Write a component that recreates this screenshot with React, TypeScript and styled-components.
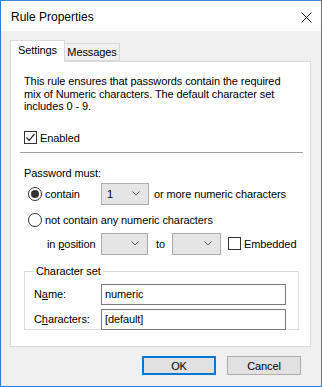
import React from "react";
import styled, { createGlobalStyle } from "styled-components";

const Global = createGlobalStyle`
  html, body { margin: 0; padding: 0; background: #f0f0f0; }
  body { width: 322px; height: 387px; overflow: hidden; }
  * { box-sizing: border-box; }
`;

const FONT = `"Segoe UI", "Liberation Sans", Arial, sans-serif`;

const Window = styled.div`
  width: 322px;
  height: 387px;
  border: 1px solid #2d7fd3;
  border-top-color: #3b86d6;
  background: #f0f0f0;
  font-family: ${FONT};
  font-size: 11px;
  letter-spacing: -0.1px;
  color: #000;
  display: flex;
  flex-direction: column;
  white-space: nowrap;
`;

const TitleBar = styled.div`
  height: 30px;
  background: #fff;
  display: flex;
  align-items: center;
  justify-content: space-between;
  padding: 0 8px 0 10px;
  flex-shrink: 0;
`;

const Title = styled.span`
  font-size: 12px;
  letter-spacing: 0;
  margin-top: 1px;
`;

const CloseBtn = styled.div`
  width: 14px;
  height: 14px;
  display: flex;
  align-items: center;
  justify-content: center;
  margin-top: 3px;
`;

const Body = styled.div`
  padding: 9px 10px 0 9px;
  display: flex;
  flex-direction: column;
`;

const TabStrip = styled.div`
  display: flex;
  align-items: flex-end;
  height: 21px;
  position: relative;
  z-index: 1;
`;

const Tab = styled.div<{ $active?: boolean }>`
  height: ${(p) => (p.$active ? "22px" : "18px")};
  border: 1px solid #d9d9d9;
  border-bottom: ${(p) => (p.$active ? "none" : "1px solid #d9d9d9")};
  margin-left: ${(p) => (p.$active ? "0" : "-1px")};
  margin-bottom: ${(p) => (p.$active ? "-1px" : "0")};
  background: ${(p) => (p.$active ? "#fff" : "#f0f0f0")};
  display: flex;
  align-items: center;
  padding-bottom: ${(p) => (p.$active ? "3px" : "0")};
  width: ${(p) => (p.$active ? "55px" : "56px")};
  justify-content: center;
`;

const Panel = styled.div`
  height: 286px;
  background: #fff;
  border: 1px solid #d9d9d9;
  padding: 13px 0 0 13px;
  display: flex;
  flex-direction: column;
`;

const Desc = styled.p`
  margin: 0;
  line-height: 12.5px;
`;

const CheckRow = styled.label<{ $mt?: number }>`
  display: flex;
  align-items: center;
  height: 14px;
  margin-top: ${(p) => p.$mt ?? 0}px;
  gap: 3px;
`;

const Box = styled.span`
  width: 13px;
  height: 13px;
  border: 1px solid #333;
  background: #fff;
  display: inline-flex;
  align-items: center;
  justify-content: center;
  flex-shrink: 0;
`;

const Separator = styled.div`
  height: 1px;
  background: #a0a0a0;
  width: 283px;
  margin: 7px 0 0 -4px;
`;

const Label = styled.div<{ $mt?: number }>`
  margin-top: ${(p) => p.$mt ?? 0}px;
  line-height: 13px;
`;

const Row = styled.div<{ $mt?: number; $h?: number; $pl?: number }>`
  display: flex;
  align-items: center;
  height: ${(p) => p.$h ?? 22}px;
  margin-top: ${(p) => p.$mt ?? 0}px;
  padding-left: ${(p) => p.$pl ?? 0}px;
`;

const RadioCircle = styled.span<{ $on?: boolean }>`
  width: 14px;
  height: 14px;
  border-radius: 50%;
  border: 1px solid #333;
  background: #fff;
  display: inline-flex;
  align-items: center;
  justify-content: center;
  flex-shrink: 0;
  margin-right: 3px;
  &::after {
    content: "";
    width: 8px;
    height: 8px;
    border-radius: 50%;
    background: ${(p) => (p.$on ? "#333" : "transparent")};
  }
`;

const Cell = styled.span<{ $w: number; $pl?: number }>`
  width: ${(p) => p.$w}px;
  padding-left: ${(p) => p.$pl ?? 0}px;
  flex-shrink: 0;
`;

const Select = styled.div<{ $w?: number }>`
  width: ${(p) => p.$w ?? 48}px;
  height: 22px;
  background: #e5e5e5;
  border: 1px solid #acacac;
  display: flex;
  align-items: center;
  justify-content: space-between;
  padding: 0 8px 0 5px;
  flex-shrink: 0;
`;

const After = styled.span<{ $ml?: number }>`
  margin-left: ${(p) => p.$ml ?? 5}px;
`;

const Group = styled.fieldset`
  margin: 10px 0 0 0;
  width: 275px;
  height: 65px;
  border: 1px solid #dcdcdc;
  padding: 0 0 0 9px;
  display: flex;
  flex-direction: column;
  min-width: 0;
`;

const Legend = styled.legend`
  padding: 0 2px;
  margin-left: 0;
  line-height: 13px;
`;

const FieldRow = styled.div<{ $mt?: number }>`
  display: flex;
  align-items: center;
  margin-top: ${(p) => p.$mt ?? 0}px;
`;

const FieldLabel = styled.span`
  width: 67px;
  flex-shrink: 0;
`;

const Input = styled.div`
  width: 185px;
  height: 21px;
  border: 1px solid #7a7a7a;
  background: #fff;
  padding: 0 3px;
  display: flex;
  align-items: center;
`;

const Footer = styled.div`
  display: flex;
  justify-content: flex-end;
  gap: 11px;
  padding: 9px 10px 0 0;
`;

const Button = styled.div<{ $default?: boolean }>`
  width: 74px;
  height: 19px;
  background: #e1e1e1;
  border: ${(p) => (p.$default ? "2px solid #0078d7" : "1px solid #adadad")};
  display: flex;
  align-items: center;
  justify-content: center;
`;

const U = styled.span`
  text-decoration: underline;
  text-underline-offset: 1px;
`;

const Chevron = () => (
  <svg width="8" height="5" viewBox="0 0 8 5">
    <path d="M0.5 0.5 L4 4 L7.5 0.5" fill="none" stroke="#606060" strokeWidth="1" />
  </svg>
);

const Check = () => (
  <svg width="11" height="11" viewBox="0 0 11 11">
    <path d="M1.5 5.5 L4.2 8.3 L9.5 2" fill="none" stroke="#222" strokeWidth="1.2" />
  </svg>
);

export default function App() {
  return (
    <>
      <Global />
      <Window>
        <TitleBar>
          <Title>Rule Properties</Title>
          <CloseBtn>
            <svg width="11" height="11" viewBox="0 0 11 11">
              <path d="M0.5 0.5 L10.5 10.5 M10.5 0.5 L0.5 10.5" stroke="#111" strokeWidth="1" />
            </svg>
          </CloseBtn>
        </TitleBar>
        <Body>
          <TabStrip>
            <Tab $active>Settings</Tab>
            <Tab>Messages</Tab>
          </TabStrip>
          <Panel>
            <Desc>
              This rule ensures that passwords contain the required
              <br />
              mix of Numeric characters. The default character set
              <br />
              includes 0 - 9.
            </Desc>
            <CheckRow $mt={18}>
              <Box>
                <Check />
              </Box>
              Enabled
            </CheckRow>
            <Separator />
            <Label $mt={14}>Password must:</Label>
            <Row $mt={3} $pl={4}>
              <RadioCircle $on />
              <Cell $w={56}>contain</Cell>
              <Select>
                <span>1</span>
                <Chevron />
              </Select>
              <After>or more numeric characters</After>
            </Row>
            <Row $mt={7} $h={16} $pl={4}>
              <RadioCircle />
              not contain any numeric characters
            </Row>
            <Row $mt={5} $pl={23}>
              <Cell $w={54}>
                in <U>p</U>osition
              </Cell>
              <Select $w={47}>
                <span />
                <Chevron />
              </Select>
              <Cell $w={24} $pl={8}>
                to
              </Cell>
              <Select $w={49}>
                <span />
                <Chevron />
              </Select>
              <After $ml={7}>
                <CheckRow>
                  <Box />
                  Embedded
                </CheckRow>
              </After>
            </Row>
            <Group>
              <Legend>Character set</Legend>
              <FieldRow $mt={6}>
                <FieldLabel>
                  N<U>a</U>me:
                </FieldLabel>
                <Input>numeric</Input>
              </FieldRow>
              <FieldRow $mt={4}>
                <FieldLabel>
                  C<U>h</U>aracters:
                </FieldLabel>
                <Input>[default]</Input>
              </FieldRow>
            </Group>
          </Panel>
          <Footer>
            <Button $default>OK</Button>
            <Button>Cancel</Button>
          </Footer>
        </Body>
      </Window>
    </>
  );
}
